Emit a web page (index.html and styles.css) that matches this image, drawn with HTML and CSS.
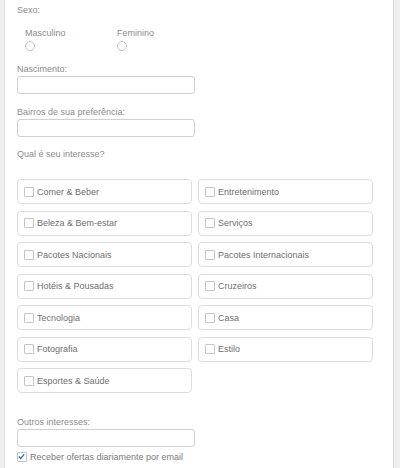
FILE: index.html
```html
<!DOCTYPE html>
<html lang="pt">
<head>
<meta charset="utf-8">
<link rel="stylesheet" href="styles.css">
</head>
<body>
<div class="panel">
  <div class="label sexo">Sexo:</div>
  <div class="radios">
    <label class="radio-opt"><span class="radio-text">Masculino</span><span class="radio"></span></label>
    <label class="radio-opt"><span class="radio-text">Feminino</span><span class="radio"></span></label>
  </div>
  <div class="label field-label">Nascimento:</div>
  <div class="input"></div>
  <div class="label field-label">Bairros de sua preferência:</div>
  <div class="input"></div>
  <div class="label question">Qual é seu interesse?</div>
  <div class="grid">
    <div class="card"><span class="box"></span>Comer &amp; Beber</div>
    <div class="card"><span class="box"></span>Entretenimento</div>
    <div class="card"><span class="box"></span>Beleza &amp; Bem-estar</div>
    <div class="card"><span class="box"></span>Serviços</div>
    <div class="card"><span class="box"></span>Pacotes Nacionais</div>
    <div class="card"><span class="box"></span>Pacotes Internacionais</div>
    <div class="card"><span class="box"></span>Hotéis &amp; Pousadas</div>
    <div class="card"><span class="box"></span>Cruzeiros</div>
    <div class="card"><span class="box"></span>Tecnologia</div>
    <div class="card"><span class="box"></span>Casa</div>
    <div class="card"><span class="box"></span>Fotografia</div>
    <div class="card"><span class="box"></span>Estilo</div>
    <div class="card"><span class="box"></span>Esportes &amp; Saúde</div>
  </div>
  <div class="label outros">Outros interesses:</div>
  <div class="input"></div>
  <div class="check-row">
    <span class="box checked"><svg width="9" height="9" viewBox="0 0 9 9"><path d="M1.8 4.6 L3.6 6.4 L7.2 2.4" fill="none" stroke="#2a6fc9" stroke-width="1.4"/></svg></span>Receber ofertas diariamente por email
  </div>
</div>
</body>
</html>
```
FILE: styles.css
```css
html, body {
  margin: 0;
  padding: 0;
  background: #efefef;
}
body {
  font-family: "Liberation Sans", Arial, sans-serif;
  font-size: 9px;
  color: #808080;
}
.panel {
  margin-left: 4px;
  width: 376px;
  height: 468px;
  overflow: hidden;
  background: #fff;
  border-left: 1px solid #e0e0e0;
  border-right: 1px solid #d8d8d8;
  padding-left: 12px;
}
.label {
  line-height: 10px;
  height: 10px;
  color: #8c8c8c;
}
.sexo { padding-top: 5px; }
.radios {
  display: flex;
  margin-top: 13px;
  padding-left: 8px;
}
.radio-opt {
  display: flex;
  flex-direction: column;
  width: 92px;
}
.radio-text {
  line-height: 10px;
  color: #8c8c8c;
}
.radio {
  margin-top: 3px;
  width: 8px;
  height: 8px;
  border: 1px solid #c4c4c4;
  border-radius: 50%;
  background: #fff;
}
.field-label { margin-top: 13px; }
.input {
  margin-top: 2px;
  width: 176px;
  height: 16px;
  border: 1px solid #d0d0d0;
  border-radius: 3px;
  background: #fff;
}
.question { margin-top: 12px; }
.grid {
  margin-top: 20px;
  display: grid;
  grid-template-columns: 175px 175px;
  column-gap: 6px;
  row-gap: 6.5px;
}
.card {
  height: 23px;
  border: 1px solid #dddddd;
  border-radius: 4px;
  display: flex;
  align-items: center;
  padding-left: 6px;
  color: #707070;
}
.box {
  width: 8px;
  height: 8px;
  border: 1px solid #c6c6c6;
  border-radius: 1px;
  margin-right: 3px;
  flex: none;
  background: #fff;
}
.box svg {
  display: block;
  margin: -1px 0 0 -1px;
}
.outros { margin-top: 24px; }
.check-row {
  margin-top: 5px;
  display: flex;
  align-items: center;
  line-height: 10px;
  color: #7a7a7a;
}
```
